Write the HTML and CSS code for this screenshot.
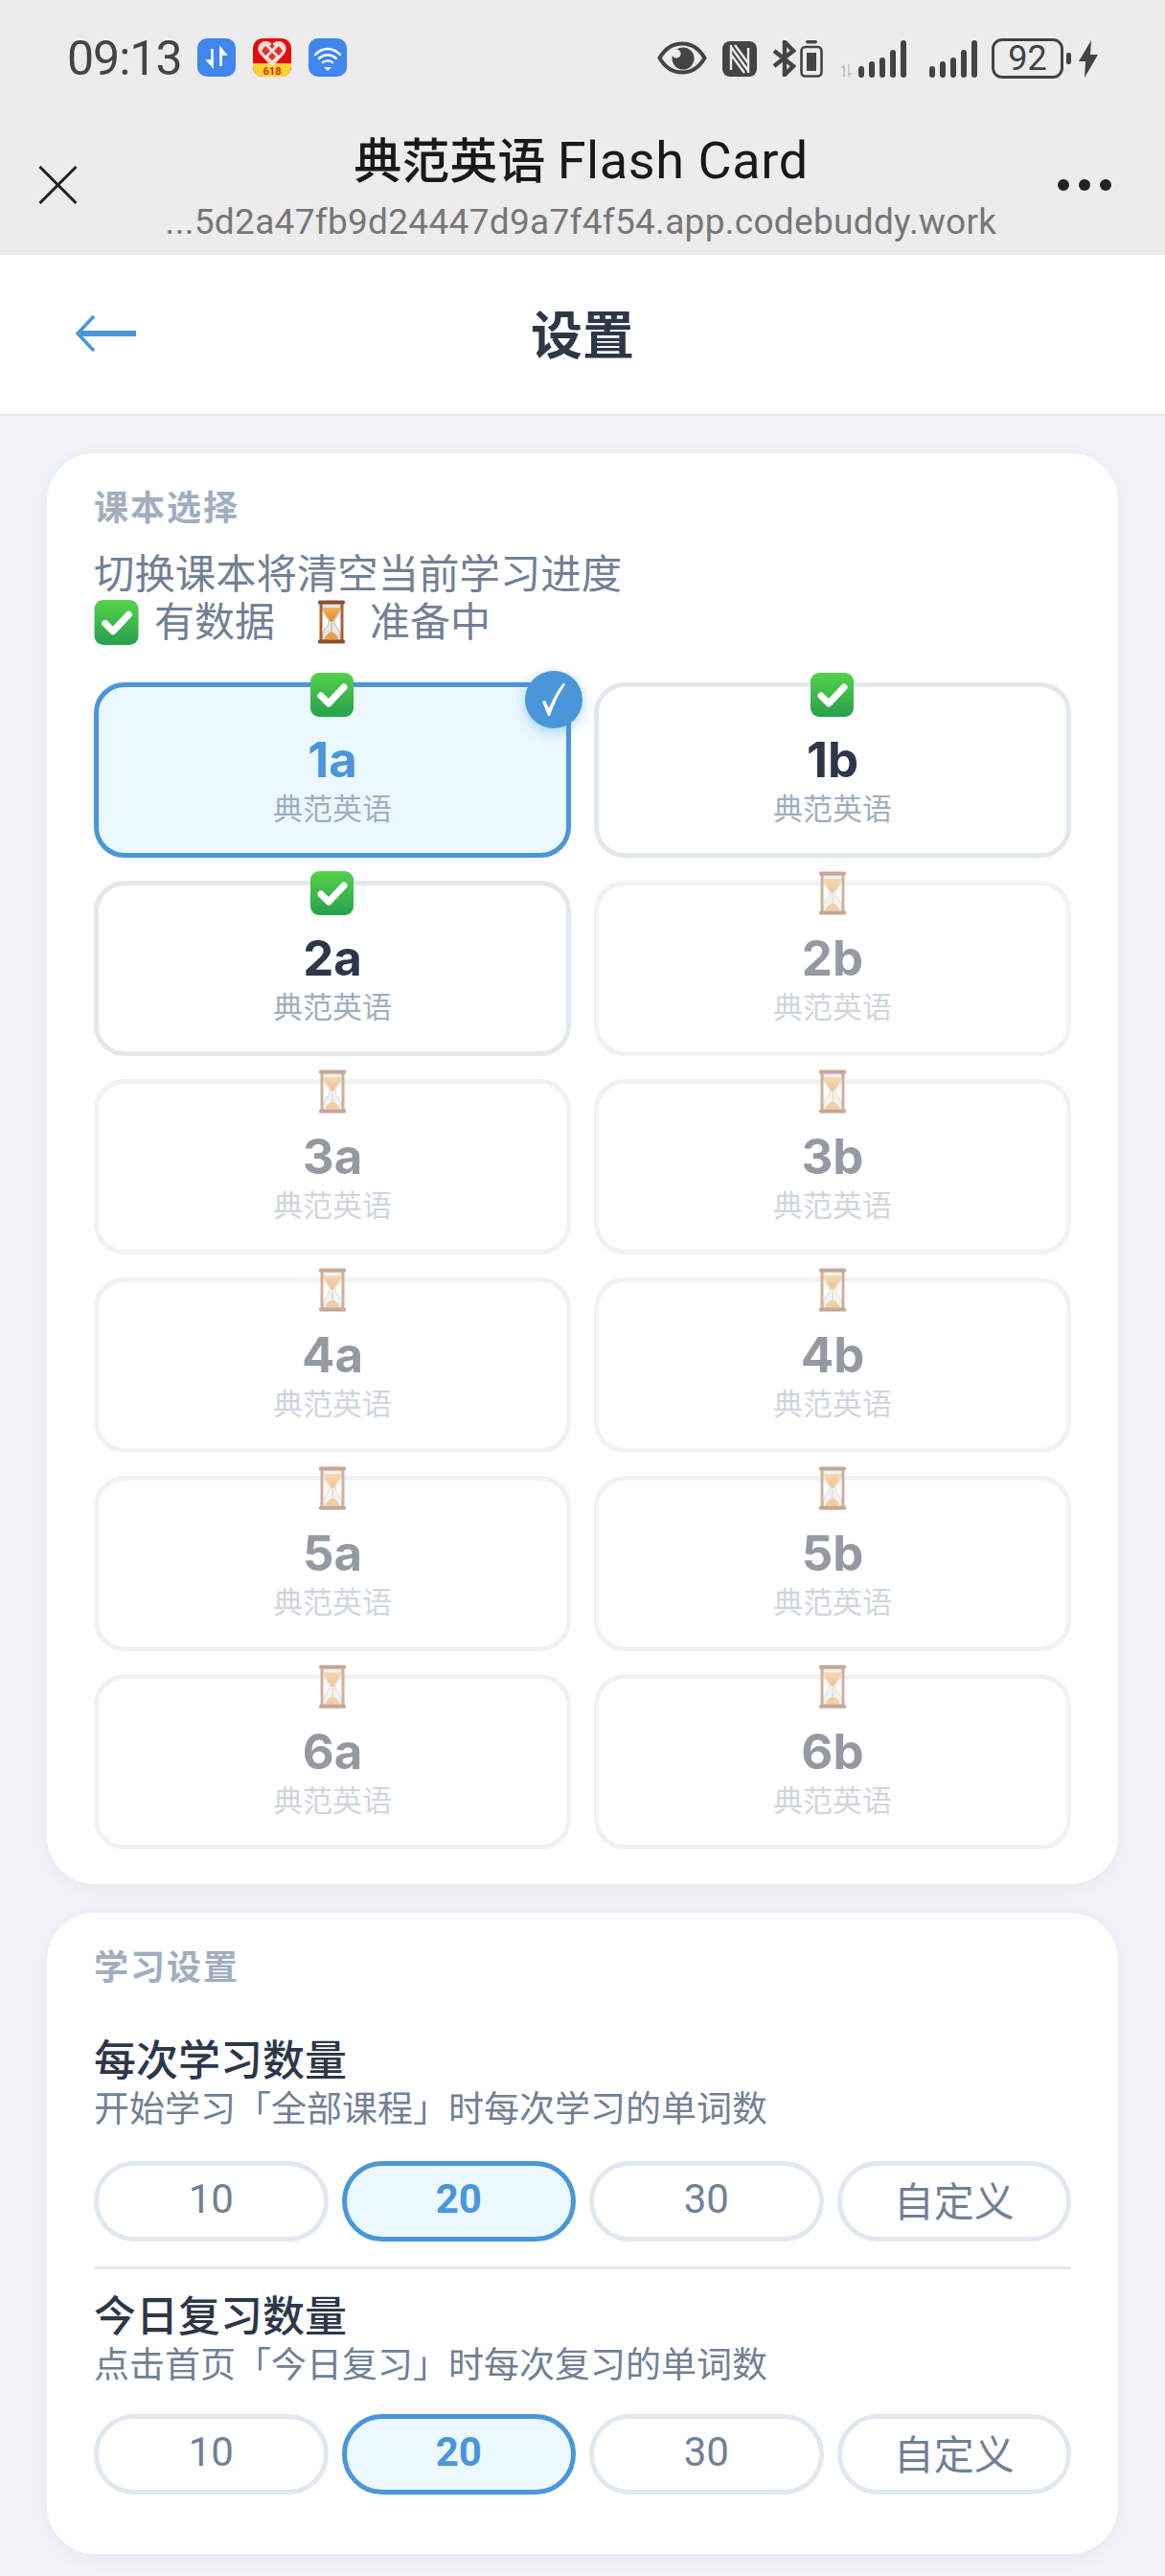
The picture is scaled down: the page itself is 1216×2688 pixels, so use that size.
FILE: index.html
```html
<!DOCTYPE html>
<html lang="zh-CN">
  <head>
    <meta charset="UTF-8" />
    <meta name="viewport" content="width=device-width, initial-scale=1.0" />
    <title>典范英语 Flash Card</title>
    <link rel="stylesheet" href="styles.css">
  </head>
  <body>
    <svg class="defs" width="0" height="0" aria-hidden="true">
      <defs>
        <linearGradient id="green" x1="0" y1="0" x2="0" y2="1">
          <stop offset="0" stop-color="#55d34a" />
          <stop offset="1" stop-color="#27a04e" />
        </linearGradient>
        <linearGradient id="sand" x1="0" y1="0" x2="0" y2="1">
          <stop offset="0" stop-color="#f1b45c" />
          <stop offset="1" stop-color="#d98a2c" />
        </linearGradient>
        <symbol id="check" viewBox="0 0 45 46">
          <rect width="45" height="46" rx="9" fill="url(#green)" />
          <path d="M11 24l8 8 16-17" fill="none" stroke="#fff" stroke-width="7" stroke-linecap="round" stroke-linejoin="round" />
        </symbol>
        <symbol id="hourglass" viewBox="0 0 30 46">
          <path d="M5 4c0 12 7 14 7 19S5 30 5 42h20c0-12-7-14-7-19s7-7 7-19z" fill="#e4e8ea" stroke="#c9b6a4" stroke-width="1" />
          <path d="M6 8h18c-1 7-6 10-8 15h-2c-2-5-7-8-8-15z" fill="url(#sand)" />
          <path d="M15 24v10M8 41c1-4 5-7 7-7s6 3 7 7z" fill="#e6a048" stroke="#e6a048" stroke-width="1" />
          <rect x="2.500" y="4" width="3" height="38" fill="#a8623c" />
          <rect x="24.500" y="4" width="3" height="38" fill="#a8623c" />
          <rect x="1" y="0.500" width="28" height="4" rx="1.500" fill="#8f4f30" />
          <rect x="1" y="41.500" width="28" height="4" rx="1.500" fill="#8f4f30" />
        </symbol>
      </defs>
    </svg>

    <div class="topbar">
      <div class="statusbar">
        <div class="status-left">
          <span class="clock">09:13</span>
          <svg class="app-icon" viewBox="0 0 40 40">
            <rect width="40" height="40" rx="10" fill="#3f86ee" />
            <path d="M15.500 11v17M11 23.500l4.500 5 0-5zM24.500 29V12M24.500 11l4.500 5.500h-4.500z" stroke="#fff" stroke-width="2.600" fill="#fff" />
          </svg>
          <svg class="app-icon" viewBox="0 0 40 40">
            <rect width="40" height="40" rx="10" fill="#e60b0b" />
            <path d="M0 26h40v4a10 10 0 0 1-10 10H10A10 10 0 0 1 0 30z" fill="#fbd52f" />
            <path d="M20 30L7 16C3 10 7 3 13 3c3 0 5 1 7 3 2-2 4-3 7-3 6 0 10 7 6 13z" fill="#f7dcd8" />
            <path d="M13 8l5 5-5 5-4-5zM27 8l4 5-4 5-5-5zM20 15l4 4-4 4-4-4zM20 5l2.500 3-2.500 3-2.500-3z" fill="#e0302a" />
            <text class="icon-618" x="20" y="38" text-anchor="middle">618</text>
          </svg>
          <svg class="app-icon" viewBox="0 0 40 40">
            <rect width="40" height="40" rx="10" fill="#3f86ee" />
            <path d="M7 17c8-8 18-8 26 0M11 21c6-5 12-5 18 0M15 25c3-2 7-2 10 0" fill="none" stroke="#fff" stroke-width="2.300" stroke-linecap="round" />
            <path d="M16 30h8l-4 4z" fill="#fff" />
          </svg>
        </div>
        <div class="status-right">
          <svg class="si-eye" viewBox="0 0 52 35">
            <path d="M2.500 17.500C8 8 16 2.500 26 2.500S44 8 49.500 17.500C44 27 36 32.500 26 32.500S8 27 2.500 17.500z" fill="none" stroke="#444" stroke-width="4" />
            <circle cx="27" cy="18" r="11.500" fill="#444" />
            <circle cx="20" cy="13" r="4.500" fill="#ececec" />
          </svg>
          <svg class="si-nfc" viewBox="0 0 36 37">
            <rect width="36" height="37" rx="8" fill="#444" />
            <path d="M9 4v26M27 33V7M9 6l18 25M9 14l14 19M27 23L13 4" fill="none" stroke="#ececec" stroke-width="2.400" />
          </svg>
          <svg class="si-bt" viewBox="0 0 25 38">
            <path d="M2 11l20 16-9 9V2l9 9L2 27" fill="none" stroke="#444" stroke-width="4.500" />
          </svg>
          <svg class="si-cell" viewBox="0 0 24 39">
            <rect x="6" y="0" width="12" height="3.500" rx="1.700" fill="#444" />
            <rect x="1.500" y="7" width="21" height="30.500" rx="4" fill="none" stroke="#444" stroke-width="2.600" />
            <rect x="7" y="13" width="10" height="19" fill="#444" />
          </svg>
          <div class="signal first">
            <svg class="si-arrows" viewBox="0 0 17 13">
              <path d="M5 13V4H2l4-4 1 1v12zM10 0h1.500v9H15l-4 4-1-1z" fill="#c6c6c6" />
            </svg>
            <span class="bar h1"></span><span class="bar h2"></span><span class="bar h3"></span><span class="bar h4"></span><span class="bar h5"></span>
          </div>
          <div class="signal">
            <span class="bar h1"></span><span class="bar h2"></span><span class="bar h3"></span><span class="bar h4"></span><span class="bar h5"></span>
          </div>
          <div class="battery">92</div>
          <span class="battery-nub"></span>
          <svg class="si-bolt" viewBox="0 0 20 39">
            <path d="M13 0L0 22h7l-1 17L20 15h-8z" fill="#444" />
          </svg>
        </div>
      </div>

      <div class="browserbar">
        <svg class="close-icon" viewBox="0 0 41 40">
          <path d="M1.500 1l38 38M39.500 1l-38 38" stroke="#222" stroke-width="3" fill="none" />
        </svg>
        <div class="page-info">
          <div class="page-title">典范英语 <span class="title-latin">Flash Card</span></div>
          <div class="page-url">...5d2a47fb9d24447d9a7f4f54.app.codebuddy.work</div>
        </div>
        <div class="more-dots"><span></span><span></span><span></span></div>
      </div>
    </div>

    <header class="page-header">
      <svg class="back-icon" viewBox="0 0 64 38">
        <path d="M64 19H6" fill="none" stroke="#4a96d9" stroke-width="6" />
        <path d="M20 1L3 19l17 18" fill="none" stroke="#4a96d9" stroke-width="3.500" />
      </svg>
      <h1>设置</h1>
    </header>

    <main class="content">
      <section class="card course-card">
        <div class="section-title">课本选择</div>
        <div class="note">切换课本将清空当前学习进度</div>
        <div class="note legend">
          <svg class="legend-check"><use href="#check" /></svg>
          <span>有数据</span>
          <svg class="legend-glass"><use href="#hourglass" /></svg>
          <span>准备中</span>
        </div>

        <div class="book-grid">
          <div class="book selected">
            <svg class="book-mark"><use href="#check" /></svg>
            <span class="tick">
              <svg viewBox="0 0 24 34"><path d="M0 19l3-1 4 8C11 16 16 7 22 0l2 1C17 11 12 22 8 34h-2z" fill="#fff" /></svg>
            </span>
            <div class="book-name">1a</div>
            <div class="book-sub">典范英语</div>
          </div>
          <div class="book">
            <svg class="book-mark"><use href="#check" /></svg>
            <div class="book-name">1b</div>
            <div class="book-sub">典范英语</div>
          </div>
          <div class="book">
            <svg class="book-mark"><use href="#check" /></svg>
            <div class="book-name">2a</div>
            <div class="book-sub">典范英语</div>
          </div>
          <div class="book pending">
            <svg class="book-mark glass"><use href="#hourglass" /></svg>
            <div class="book-name">2b</div>
            <div class="book-sub">典范英语</div>
          </div>
          <div class="book pending">
            <svg class="book-mark glass"><use href="#hourglass" /></svg>
            <div class="book-name">3a</div>
            <div class="book-sub">典范英语</div>
          </div>
          <div class="book pending">
            <svg class="book-mark glass"><use href="#hourglass" /></svg>
            <div class="book-name">3b</div>
            <div class="book-sub">典范英语</div>
          </div>
          <div class="book pending">
            <svg class="book-mark glass"><use href="#hourglass" /></svg>
            <div class="book-name">4a</div>
            <div class="book-sub">典范英语</div>
          </div>
          <div class="book pending">
            <svg class="book-mark glass"><use href="#hourglass" /></svg>
            <div class="book-name">4b</div>
            <div class="book-sub">典范英语</div>
          </div>
          <div class="book pending">
            <svg class="book-mark glass"><use href="#hourglass" /></svg>
            <div class="book-name">5a</div>
            <div class="book-sub">典范英语</div>
          </div>
          <div class="book pending">
            <svg class="book-mark glass"><use href="#hourglass" /></svg>
            <div class="book-name">5b</div>
            <div class="book-sub">典范英语</div>
          </div>
          <div class="book pending">
            <svg class="book-mark glass"><use href="#hourglass" /></svg>
            <div class="book-name">6a</div>
            <div class="book-sub">典范英语</div>
          </div>
          <div class="book pending">
            <svg class="book-mark glass"><use href="#hourglass" /></svg>
            <div class="book-name">6b</div>
            <div class="book-sub">典范英语</div>
          </div>
        </div>
      </section>

      <section class="card study-card">
        <div class="section-title">学习设置</div>

        <div class="setting first">
          <div class="setting-title">每次学习数量</div>
          <div class="setting-desc">开始学习「全部课程」时每次学习的单词数</div>
          <div class="options">
            <button>10</button>
            <button class="active">20</button>
            <button>30</button>
            <button>自定义</button>
          </div>
        </div>

        <div class="setting">
          <div class="setting-title">今日复习数量</div>
          <div class="setting-desc">点击首页「今日复习」时每次复习的单词数</div>
          <div class="options">
            <button>10</button>
            <button class="active">20</button>
            <button>30</button>
            <button>自定义</button>
          </div>
        </div>
      </section>
    </main>
  </body>
</html>
```

FILE: styles.css
```css
* {
  box-sizing: border-box;
}

html,
body {
  margin: 0;
  height: 2688px;
  overflow: hidden;
}

body {
  font-family: Inter, "Noto Sans CJK SC", sans-serif;
  background-color: #f0f4f8;
  color: #2d3748;
}

.defs {
  position: absolute;
}

svg {
  display: block;
  flex: none;
}

/* system + browser chrome */
.topbar {
  height: 266px;
  background-color: #ececec;
}

.statusbar {
  display: flex;
  justify-content: space-between;
  height: 122px;
  padding: 40px 70px 0;
}

.status-left,
.status-right {
  display: flex;
  align-items: flex-start;
}

.clock {
  width: 136px;
  font-family: Roboto, sans-serif;
  font-size: 50px;
  line-height: 42px;
  letter-spacing: -1px;
  color: #444;
}

.app-icon {
  width: 40px;
  height: 40px;
  margin-right: 18px;
}

.icon-618 {
  font-family: Roboto, sans-serif;
  font-size: 11px;
  font-weight: 700;
  fill: #d3260f;
}

.si-eye {
  width: 52px;
  height: 35px;
  margin: 3px 16px 0 0;
}

.si-nfc {
  width: 36px;
  height: 37px;
  margin: 3px 16px 0 0;
}

.si-bt {
  width: 25px;
  height: 38px;
  margin: 2px 4px 0 0;
}

.si-cell {
  width: 24px;
  height: 39px;
  margin: 2px 16px 0 0;
}

.signal {
  display: flex;
  align-items: flex-end;
  gap: 5px;
  height: 40px;
  margin: 1px 15px 0 0;
}

.signal.first {
  margin-right: 24px;
}

.si-arrows {
  width: 17px;
  height: 13px;
  margin-bottom: 1px;
  margin-right: -1px;
}

.bar {
  width: 6px;
  border-radius: 3px;
  background-color: #444;
}

.h1 { height: 12px; }
.h2 { height: 17px; }
.h3 { height: 21px; }
.h4 { height: 29px; }
.h5 { height: 39px; }

.battery {
  width: 75px;
  height: 42px;
  margin-right: 3px;
  border: 3px solid #444;
  border-radius: 11px;
  font-family: Roboto, sans-serif;
  font-size: 36px;
  line-height: 36px;
  text-align: center;
  color: #444;
}

.battery-nub {
  width: 5px;
  height: 12px;
  margin: 15px 8px 0 0;
  border-radius: 2px;
  background-color: #444;
}

.si-bolt {
  width: 20px;
  height: 39px;
  margin-top: 2px;
}

.browserbar {
  display: flex;
  align-items: flex-start;
  padding: 0 56px 0 40px;
}

.close-icon {
  width: 41px;
  height: 40px;
  margin-top: 51px;
}

.page-info {
  flex: 1;
  padding-left: 28px;
  text-align: center;
}

.page-title {
  margin-top: 18px;
  font-size: 50px;
  line-height: 56px;
  font-family: Roboto, "Noto Sans CJK SC", sans-serif;
  font-weight: 500;
  color: #191919;
}

.title-latin {
  font-size: 54px;
  font-weight: 400;
  letter-spacing: 0.6px;
}

.page-url {
  margin-top: 13px;
  font-family: Roboto, sans-serif;
  font-size: 37px;
  line-height: 44px;
  letter-spacing: 0.3px;
  color: #777;
  white-space: nowrap;
}

.more-dots {
  display: flex;
  gap: 10px;
  margin-top: 65px;
}

.more-dots span {
  width: 12px;
  height: 12px;
  border-radius: 50%;
  background-color: #222;
}

/* page header */
.page-header {
  position: relative;
  display: flex;
  align-items: center;
  justify-content: center;
  height: 168px;
  padding-bottom: 6px;
  background-color: #fff;
  border-bottom: 2px solid #e6ebf0;
}

.page-header h1 {
  margin: 0;
  font-size: 54px;
  font-weight: 700;
  color: #2d3748;
}

.back-icon {
  position: absolute;
  left: 78px;
  top: 63px;
  width: 64px;
  height: 38px;
}

.content {
  display: flex;
  flex-direction: column;
  gap: 30px;
  padding: 39px 49px 0;
}

.card {
  background-color: #fff;
  border-radius: 50px;
  box-shadow: 0 4px 24px rgba(0, 0, 0, 0.05);
  padding: 32px 49px 36px;
}

.section-title {
  font-size: 36px;
  line-height: 50px;
  font-weight: 600;
  letter-spacing: 2px;
  color: #a0aec0;
}

.note {
  font-size: 42.4px;
  line-height: 50px;
  color: #718096;
}

.course-card .section-title {
  margin-bottom: 19px;
}

.legend {
  display: flex;
  align-items: center;
  font-size: 42px;
}

.legend-check {
  width: 47px;
  height: 47px;
  margin-right: 16px;
}

.legend-glass {
  width: 30px;
  height: 48px;
  margin: 0 25px 0 44px;
}

/* book grid */
.book-grid {
  display: grid;
  grid-template-columns: 1fr 1fr;
  gap: 24px;
  margin-top: 38px;
}

.book {
  position: relative;
  height: 183px;
  padding-top: 48px;
  border: 5px solid #e2e8ec;
  border-radius: 32px;
  text-align: center;
  background-color: #fff;
}

.book.selected {
  background-color: #ebf8ff;
  border-color: #4a96d9;
}

.book.pending {
  opacity: 0.5;
}

.book-mark {
  position: absolute;
  top: -15px;
  left: 50%;
  width: 45px;
  height: 46px;
  margin-left: -23px;
}

.book-mark.glass {
  width: 30px;
  margin-left: -15px;
}

.tick {
  position: absolute;
  top: -17px;
  right: -17px;
  display: flex;
  align-items: center;
  justify-content: center;
  width: 60px;
  height: 60px;
  border-radius: 50%;
  background-color: #4a96d9;
  box-shadow: 0 4px 14px rgba(66, 153, 225, 0.4);
}

.tick svg {
  width: 24px;
  height: 34px;
}

.book-name {
  font-size: 51px;
  line-height: 56px;
  font-weight: 700;
  color: #2d3748;
}

.selected .book-name {
  color: #4a96d9;
}

.book-sub {
  padding-top: 3px;
  font-size: 31px;
  line-height: 40px;
  color: #a0aec0;
}

/* study settings */
.study-card {
  padding-bottom: 36px;
}

.setting {
  padding-bottom: 26px;
}

.setting.first {
  margin-top: 44px;
  margin-bottom: 21px;
  border-bottom: 3px solid #e2e8f0;
}

.setting:last-child .options {
  margin-top: 28px;
}

.setting-title {
  font-size: 44px;
  line-height: 56px;
  font-weight: 500;
  color: #2d3748;
}

.setting-desc {
  font-size: 37px;
  line-height: 46px;
  color: #718096;
}

.options {
  display: grid;
  grid-template-columns: repeat(4, 1fr);
  gap: 14px;
  margin-top: 31px;
}

.options button {
  height: 84px;
  padding: 0 0 5px;
  border: 5px solid #e2e8f0;
  border-radius: 42px;
  background-color: #fff;
  font-family: Roboto, "Noto Sans CJK SC", sans-serif;
  font-size: 42px;
  color: #718096;
}

.options button.active {
  background-color: #ebf8ff;
  border-color: #4a96d9;
  color: #4a96d9;
  font-weight: 700;
}
```
